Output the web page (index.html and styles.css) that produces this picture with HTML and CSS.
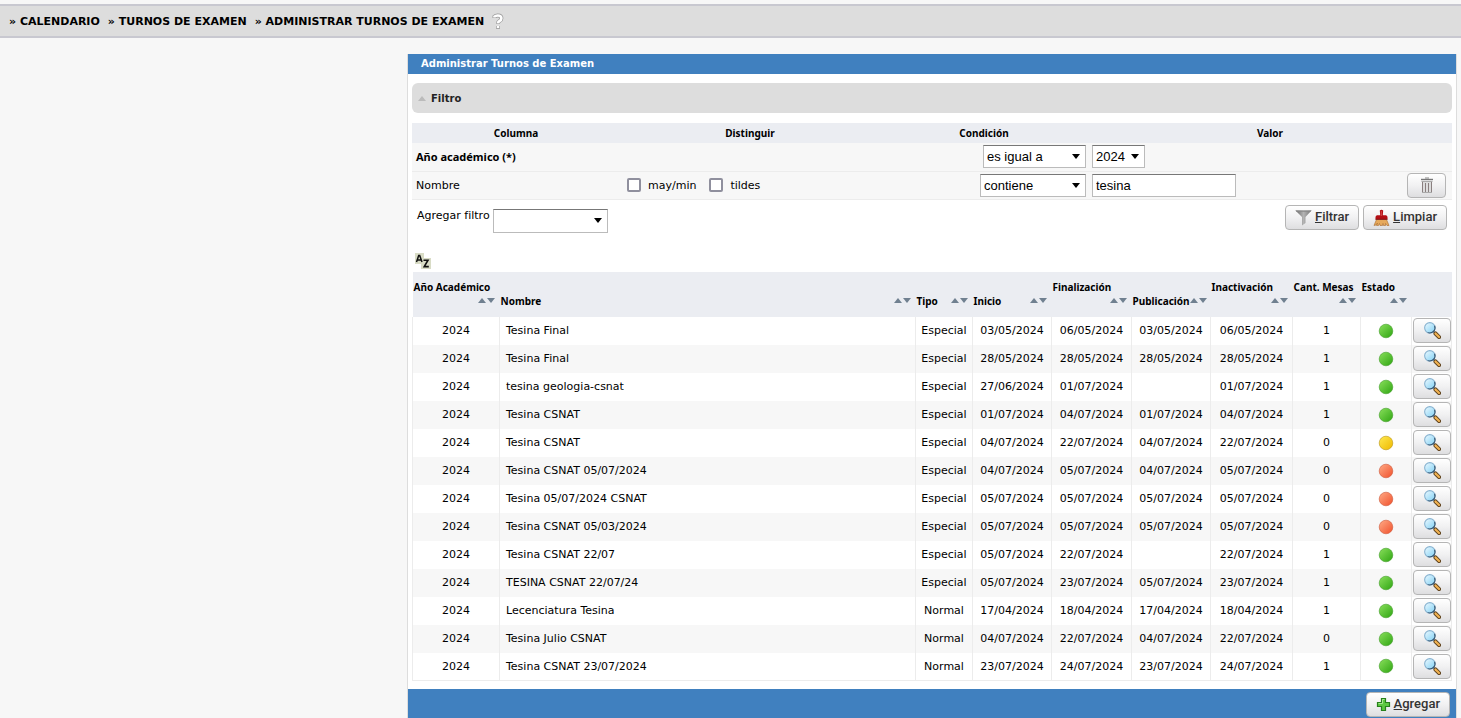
FILE: index.html
```html
<!DOCTYPE html>
<html lang="es">
<head>
<meta charset="UTF-8">
<meta name="viewport" content="width=device-width, initial-scale=1.0">
<title>Administrar Turnos de Examen</title>
<link rel="stylesheet" href="styles.css">
</head>
<body>

<!-- iconos compartidos -->
<svg class="sprites" width="0" height="0" aria-hidden="true">
  <defs>
    <linearGradient id="g-verde" x1="0" y1="0" x2="1" y2="1"><stop offset="0" stop-color="#8ae05c"/><stop offset="1" stop-color="#2fa512"/></linearGradient>
    <linearGradient id="g-amarillo" x1="0" y1="0" x2="1" y2="1"><stop offset="0" stop-color="#ffea50"/><stop offset="1" stop-color="#eeb800"/></linearGradient>
    <linearGradient id="g-rojo" x1="0" y1="0" x2="1" y2="1"><stop offset="0" stop-color="#ffab86"/><stop offset="1" stop-color="#f0502c"/></linearGradient>
    <linearGradient id="g-lente" x1="0" y1="0" x2="1" y2="1"><stop offset="0" stop-color="#eefaff"/><stop offset="1" stop-color="#7fd0f5"/></linearGradient>
    <linearGradient id="g-embudo" x1="0" y1="0" x2="1" y2="0"><stop offset="0" stop-color="#666"/><stop offset="0.5" stop-color="#b4b4b4"/><stop offset="1" stop-color="#777"/></linearGradient>
  </defs>
  <symbol id="verde" viewBox="0 0 16 16"><circle cx="8" cy="8" r="6.8" fill="url(#g-verde)" stroke="#3f9c26" stroke-width="0.6"/></symbol>
  <symbol id="amarillo" viewBox="0 0 16 16"><circle cx="8" cy="8" r="6.8" fill="url(#g-amarillo)" stroke="#b89412" stroke-width="0.6"/></symbol>
  <symbol id="rojo" viewBox="0 0 16 16"><circle cx="8" cy="8" r="6.8" fill="url(#g-rojo)" stroke="#cc5538" stroke-width="0.6"/></symbol>
  <symbol id="lupa" viewBox="0 0 16 16">
    <path d="M8.8 8.8l2 2" stroke="#34536e" stroke-width="1.4"/>
    <path d="M10.8 10.8l3.4 3.4" stroke="#5f4420" stroke-width="3.8" stroke-linecap="round"/>
    <path d="M10.8 10.8l3.4 3.4" stroke="#f2b352" stroke-width="2" stroke-linecap="round"/>
    <circle cx="5.5" cy="5.5" r="4.9" fill="url(#g-lente)" stroke="#86b2d0" stroke-width="1"/>
    <path d="M10 3.5a5 5 0 0 1-6.5 6.5" fill="none" stroke="#34536e" stroke-width="1"/>
  </symbol>
</svg>

<nav class="barra">
  <a href="#">» CALENDARIO</a> <a href="#">» TURNOS DE EXAMEN</a> <a href="#">» ADMINISTRAR TURNOS DE EXAMEN</a>
  <a class="ayuda" href="#" aria-label="Ayuda"><svg width="12" height="17" viewBox="0 0 12 17"><path d="M2.5 5V3.6Q3.5 2.5 5.8 2.5Q9.4 2.5 9.4 5.2Q9.4 7 7.5 8Q6 8.8 6 10.8M6 13v2.8" fill="none" stroke="#999" stroke-width="4"/><path d="M2.5 4.4V3.6Q3.5 2.5 5.8 2.5Q9.4 2.5 9.4 5.2Q9.4 7 7.5 8Q6 8.8 6 10.3M6 13v2" fill="none" stroke="#fff" stroke-width="2.6"/></svg></a>
</nav>

<main class="contenido">
  <section class="panel">
    <h1 class="titulo">Administrar Turnos de Examen</h1>

    <div class="cuerpo">
      <h2 class="filtro-titulo"><span class="flecha-filtro"></span>Filtro</h2>

      <table class="filtros">
        <thead>
          <tr><th class="f-columna">Columna</th><th class="f-distinguir">Distinguir</th><th class="f-condicion">Condición</th><th>Valor</th></tr>
        </thead>
        <tbody>
          <tr>
            <td class="obligatorio">Año académico (*)</td>
            <td></td>
            <td class="der"><select class="campo s-igual" aria-label="Condición de año académico"><option>es igual a</option></select></td>
            <td><select class="campo s-anio" aria-label="Año académico"><option>2024</option></select></td>
          </tr>
          <tr>
            <td>Nombre</td>
            <td>
              <div class="checks">
                <label><input type="checkbox">may/min</label>
                <label><input type="checkbox">tildes</label>
              </div>
            </td>
            <td class="der"><select class="campo s-contiene" aria-label="Condición de nombre"><option>contiene</option></select></td>
            <td>
              <div class="valor">
                <input class="campo" type="text" value="tesina" aria-label="Nombre">
                <button class="boton b-borrar" type="button" aria-label="Quitar filtro"><svg width="14" height="16" viewBox="0 0 14 16"><path d="M5 1h4" stroke="#888"/><path d="M1 2.5h12" stroke="#777" stroke-width="1.4"/><path d="M2 5h10v10H2z" fill="#ddd"/><path d="M1.5 4.5h11" stroke="#aaa" stroke-width="1"/><path d="M2.5 5v10M5.5 6v9M8.5 6v9M11.5 5v10" stroke="#8a7f7f" stroke-width="1"/><path d="M2 15.5h10" stroke="#aaa"/></svg></button>
              </div>
            </td>
          </tr>
        </tbody>
      </table>

      <div class="acciones">
        <label for="agregar-filtro">Agregar filtro</label>
        <select class="campo s-filtro" id="agregar-filtro"><option></option></select>
        <div class="botones">
          <button class="boton" type="button"><svg width="17" height="17" viewBox="0 0 17 17"><path d="M0.5 1.5h16l-6 6.5v6l-3.5 2.5V8z" fill="url(#g-embudo)"/><path d="M0.5 1.5h16l-1 1.2h-14z" fill="#888"/></svg><span><u>F</u>iltrar</span></button>
          <button class="boton" type="button"><svg width="17" height="17" viewBox="0 0 17 17"><path d="M3.5 10.5h10l2.5 6h-2l-1.5-2v2h-2l-.5-2-.5 2H7l-.5-2-1 2h-2l1-2.5-1.5 2-2 .5z" fill="#e6a95c" stroke="#a86a2c" stroke-width="0.6"/><path d="M6.8 1.5Q8.5 0 10.2 1.5L9.8 6.2h3.2q1.5.5 1.5 2V10.500h-12V8.200q0-1.500 1.500-2h3.200z" fill="#b40e14"/><path d="M8.300 2v5" stroke="#e05a5a" stroke-width="0.800"/><path d="M2.500 10.300h12" stroke="#701014" stroke-width="0.800"/></svg><span><u>L</u>impiar</span></button>
        </div>
      </div>

      <a class="orden" href="#" aria-label="Ordenar"><svg width="16" height="16" viewBox="0 0 16 16"><path d="M0 0h9v5h7v11H6v-5H0z" fill="#d9dcc6"/><path d="M1.500 9L3.700 2.500h1L7 9M2.600 7H6" fill="none" stroke="#111" stroke-width="1.500"/><path d="M8.500 7.200h4.500L9.200 13.600h4.600" fill="none" stroke="#111" stroke-width="1.600"/></svg></a>

      <table class="turnos">
        <colgroup><col class="c-anio"><col><col class="c-tipo"><col class="c-fecha"><col class="c-final"><col class="c-fecha"><col class="c-inact"><col class="c-mesas"><col class="c-estado"><col class="c-ver"></colgroup>
        <thead>
          <tr>
            <th><div class="cab doble">Año Académico<span class="flechas"></span></div></th>
            <th><div class="cab">Nombre<span class="flechas"></span></div></th>
            <th><div class="cab">Tipo<span class="flechas"></span></div></th>
            <th><div class="cab">Inicio<span class="flechas"></span></div></th>
            <th><div class="cab doble">Finalización<span class="flechas"></span></div></th>
            <th><div class="cab">Publicación<span class="flechas"></span></div></th>
            <th><div class="cab doble">Inactivación<span class="flechas"></span></div></th>
            <th><div class="cab doble">Cant. Mesas<span class="flechas"></span></div></th>
            <th><div class="cab doble">Estado<span class="flechas"></span></div></th>
            <th></th>
          </tr>
        </thead>
        <tbody>
          <tr><td>2024</td><td class="nombre">Tesina Final</td><td>Especial</td><td>03/05/2024</td><td>06/05/2024</td><td>03/05/2024</td><td>06/05/2024</td><td>1</td><td><svg class="estado"><use href="#verde"/></svg></td><td class="ver"><button class="boton b-ver" type="button" aria-label="Ver"><svg width="17" height="17"><use href="#lupa"/></svg></button></td></tr>
          <tr><td>2024</td><td class="nombre">Tesina Final</td><td>Especial</td><td>28/05/2024</td><td>28/05/2024</td><td>28/05/2024</td><td>28/05/2024</td><td>1</td><td><svg class="estado"><use href="#verde"/></svg></td><td class="ver"><button class="boton b-ver" type="button" aria-label="Ver"><svg width="17" height="17"><use href="#lupa"/></svg></button></td></tr>
          <tr><td>2024</td><td class="nombre">tesina geologia-csnat</td><td>Especial</td><td>27/06/2024</td><td>01/07/2024</td><td></td><td>01/07/2024</td><td>1</td><td><svg class="estado"><use href="#verde"/></svg></td><td class="ver"><button class="boton b-ver" type="button" aria-label="Ver"><svg width="17" height="17"><use href="#lupa"/></svg></button></td></tr>
          <tr><td>2024</td><td class="nombre">Tesina CSNAT</td><td>Especial</td><td>01/07/2024</td><td>04/07/2024</td><td>01/07/2024</td><td>04/07/2024</td><td>1</td><td><svg class="estado"><use href="#verde"/></svg></td><td class="ver"><button class="boton b-ver" type="button" aria-label="Ver"><svg width="17" height="17"><use href="#lupa"/></svg></button></td></tr>
          <tr><td>2024</td><td class="nombre">Tesina CSNAT</td><td>Especial</td><td>04/07/2024</td><td>22/07/2024</td><td>04/07/2024</td><td>22/07/2024</td><td>0</td><td><svg class="estado"><use href="#amarillo"/></svg></td><td class="ver"><button class="boton b-ver" type="button" aria-label="Ver"><svg width="17" height="17"><use href="#lupa"/></svg></button></td></tr>
          <tr><td>2024</td><td class="nombre">Tesina CSNAT 05/07/2024</td><td>Especial</td><td>04/07/2024</td><td>05/07/2024</td><td>04/07/2024</td><td>05/07/2024</td><td>0</td><td><svg class="estado"><use href="#rojo"/></svg></td><td class="ver"><button class="boton b-ver" type="button" aria-label="Ver"><svg width="17" height="17"><use href="#lupa"/></svg></button></td></tr>
          <tr><td>2024</td><td class="nombre">Tesina 05/07/2024 CSNAT</td><td>Especial</td><td>05/07/2024</td><td>05/07/2024</td><td>05/07/2024</td><td>05/07/2024</td><td>0</td><td><svg class="estado"><use href="#rojo"/></svg></td><td class="ver"><button class="boton b-ver" type="button" aria-label="Ver"><svg width="17" height="17"><use href="#lupa"/></svg></button></td></tr>
          <tr><td>2024</td><td class="nombre">Tesina CSNAT 05/03/2024</td><td>Especial</td><td>05/07/2024</td><td>05/07/2024</td><td>05/07/2024</td><td>05/07/2024</td><td>0</td><td><svg class="estado"><use href="#rojo"/></svg></td><td class="ver"><button class="boton b-ver" type="button" aria-label="Ver"><svg width="17" height="17"><use href="#lupa"/></svg></button></td></tr>
          <tr><td>2024</td><td class="nombre">Tesina CSNAT 22/07</td><td>Especial</td><td>05/07/2024</td><td>22/07/2024</td><td></td><td>22/07/2024</td><td>1</td><td><svg class="estado"><use href="#verde"/></svg></td><td class="ver"><button class="boton b-ver" type="button" aria-label="Ver"><svg width="17" height="17"><use href="#lupa"/></svg></button></td></tr>
          <tr><td>2024</td><td class="nombre">TESINA CSNAT 22/07/24</td><td>Especial</td><td>05/07/2024</td><td>23/07/2024</td><td>05/07/2024</td><td>23/07/2024</td><td>1</td><td><svg class="estado"><use href="#verde"/></svg></td><td class="ver"><button class="boton b-ver" type="button" aria-label="Ver"><svg width="17" height="17"><use href="#lupa"/></svg></button></td></tr>
          <tr><td>2024</td><td class="nombre">Lecenciatura Tesina</td><td>Normal</td><td>17/04/2024</td><td>18/04/2024</td><td>17/04/2024</td><td>18/04/2024</td><td>1</td><td><svg class="estado"><use href="#verde"/></svg></td><td class="ver"><button class="boton b-ver" type="button" aria-label="Ver"><svg width="17" height="17"><use href="#lupa"/></svg></button></td></tr>
          <tr><td>2024</td><td class="nombre">Tesina Julio CSNAT</td><td>Normal</td><td>04/07/2024</td><td>22/07/2024</td><td>04/07/2024</td><td>22/07/2024</td><td>0</td><td><svg class="estado"><use href="#verde"/></svg></td><td class="ver"><button class="boton b-ver" type="button" aria-label="Ver"><svg width="17" height="17"><use href="#lupa"/></svg></button></td></tr>
          <tr><td>2024</td><td class="nombre">Tesina CSNAT 23/07/2024</td><td>Normal</td><td>23/07/2024</td><td>24/07/2024</td><td>23/07/2024</td><td>24/07/2024</td><td>1</td><td><svg class="estado"><use href="#verde"/></svg></td><td class="ver"><button class="boton b-ver" type="button" aria-label="Ver"><svg width="17" height="17"><use href="#lupa"/></svg></button></td></tr>
        </tbody>
      </table>
    </div>

    <div class="pie">
      <button class="boton" type="button"><svg width="15" height="15" viewBox="0 0 15 15"><path d="M5.5 1.5h4v4h4v4h-4v4h-4v-4h-4v-4h4z" fill="#5cc840" stroke="#27801c" stroke-width="1.2"/><path d="M6.5 2.5h2M2.5 6.5h4v-4" fill="none" stroke="#a6e890"/></svg><span><u>A</u>gregar</span></button>
    </div>
  </section>
</main>

</body>
</html>
```
FILE: styles.css
```css
* {
  box-sizing: border-box;
}
body {
  margin: 0;
  padding-top: 4px;
  background-color: #f7f7f7;
  color: #000;
  font-family: "DejaVu Sans", Verdana, sans-serif;
  font-size: 11px;
}
a {
  color: inherit;
  text-decoration: none;
}
.sprites {
  position: absolute;
}

/* barra de navegacion */
.barra {
  display: flex;
  align-items: center;
  gap: 8px;
  height: 34px;
  padding-left: 9px;
  background-color: #ddd;
  border-top: 2px solid #c8c8d0;
  border-bottom: 2px solid #c8c8d0;
  font-weight: bold;
}
.ayuda svg {
  display: block;
}

/* panel principal */
.contenido {
  padding: 16px 4px 0 407px;
}
.panel {
  background-color: #fff;
  border: 1px solid #ddd;
  border-top: 0;
  border-bottom: 0;
}
.titulo {
  margin: 0;
  padding-left: 13px;
  background-color: #4080bf;
  color: #fff;
  font-size: 10px;
  line-height: 20px;
}
.cuerpo {
  padding: 9px 4px 8px;
}
.filtro-titulo {
  display: flex;
  align-items: center;
  gap: 5px;
  height: 30px;
  margin: 0 0 10px;
  padding-left: 6px;
  background-color: #ddd;
  border-radius: 6px;
  color: #222;
  font-size: 10px;
}
.flecha-filtro {
  border: 4px solid transparent;
  border-top: 0;
  border-bottom: 5px solid #bbb;
}

/* tabla de filtros */
table {
  width: 100%;
  border-collapse: collapse;
  table-layout: fixed;
}
th {
  padding: 0;
  background-color: #ebedf2;
  font-family: "Noto Sans", Tahoma, sans-serif;
  font-size: 10px;
  font-weight: bold;
}
.filtros th {
  height: 20px;
}
.filtros td {
  height: 28px;
  padding: 0 6px 0 4px;
  background-color: #f7f7f7;
  border-bottom: 1px solid #ececec;
}
.f-columna,
.f-condicion {
  width: 20%;
}
.f-distinguir {
  width: 25%;
}
.filtros .obligatorio {
  font-family: "Noto Sans", Tahoma, sans-serif;
  font-weight: bold;
}
.filtros .der {
  padding-right: 2px;
  text-align: right;
}
.campo {
  height: 23px;
  padding: 0 3px;
  background-color: #fff;
  border: 1px solid #bbb;
  border-top-color: #777;
  border-radius: 0;
  color: #000;
  font-family: "Liberation Sans", Arial, sans-serif;
  font-size: 13px;
  vertical-align: middle;
}
select.campo {
  appearance: none;
  background-image: url("data:image/svg+xml,%3Csvg xmlns='http://www.w3.org/2000/svg' width='8' height='5'%3E%3Cpath d='M0 0h8L4 5z'/%3E%3C/svg%3E");
  background-position: right 5px center;
  background-repeat: no-repeat;
}
.s-igual {
  width: 103px;
}
.s-contiene {
  width: 106px;
}
.s-anio {
  width: 53px;
}
input.campo {
  width: 144px;
}
.checks {
  display: flex;
  gap: 13px;
  padding-left: 3px;
}
.checks label {
  display: flex;
  align-items: center;
  gap: 7px;
}
.checks input {
  appearance: none;
  width: 14px;
  height: 14px;
  margin: 0;
  background-color: #fff;
  border: 2px solid #8f8f9d;
  border-radius: 2px;
}
.valor {
  display: flex;
  align-items: center;
  justify-content: space-between;
}

/* botones */
.boton {
  display: flex;
  align-items: center;
  justify-content: center;
  gap: 3px;
  height: 25px;
  padding: 0 9px;
  background: linear-gradient(#fff, #f1f1f2 50%, #dedee0);
  border: 1px solid #b5b5b5;
  border-radius: 4px;
  color: #333;
  font-family: Roboto, Arial, sans-serif;
  font-size: 13px;
  font-weight: 500;
}
.boton span {
  padding-bottom: 2px;
}
.b-borrar {
  width: 39px;
}
.b-ver {
  width: 38px;
  padding: 0;
}
.acciones {
  display: flex;
  align-items: flex-start;
  gap: 3px;
  padding: 5px 5px 0;
}
.acciones label {
  line-height: 22px;
}
.s-filtro {
  width: 115px;
  height: 24px;
  margin-top: 4px;
}
.botones {
  display: flex;
  gap: 4px;
  margin-left: auto;
}
.orden {
  display: block;
  width: 16px;
  margin: 20px 0 3px 3px;
}
.orden svg {
  display: block;
}

/* listado */
.c-anio { width: 87px; }
.c-tipo { width: 57px; }
.c-fecha { width: 79px; }
.c-final { width: 80px; }
.c-inact { width: 82px; }
.c-mesas { width: 68px; }
.c-estado { width: 51px; }
.c-ver { width: 40px; }
.turnos th {
  height: 45px;
  padding: 0 5px 9px 1px;
  vertical-align: bottom;
}
.cab {
  display: flex;
  justify-content: space-between;
  line-height: 14px;
  text-align: left;
  white-space: nowrap;
}
.doble {
  flex-direction: column;
}
.flechas {
  display: flex;
  align-items: center;
  align-self: flex-end;
  gap: 1px;
  height: 14px;
}
.flechas::before,
.flechas::after {
  content: "";
  border: 4px solid transparent;
}
.flechas::before {
  border-top: 0;
  border-bottom: 5px solid #708090;
}
.flechas::after {
  border-bottom: 0;
  border-top: 5px solid #708090;
}
.turnos tbody {
  border: 1px solid #ececec;
  border-top: 0;
}
.turnos td {
  height: 28px;
  padding: 0;
  border-left: 1px solid #ececec;
  text-align: center;
}
.turnos tr:nth-child(even) td {
  background-color: #f7f7f7;
}
.turnos .nombre {
  padding-left: 6px;
  text-align: left;
}
.turnos .ver {
  padding-left: 1px;
}
.estado {
  display: block;
  width: 16px;
  height: 16px;
  margin: 0 auto;
}
.pie {
  display: flex;
  justify-content: flex-end;
  padding: 3px 6px 1px 0;
  background-color: #4080bf;
}
```
